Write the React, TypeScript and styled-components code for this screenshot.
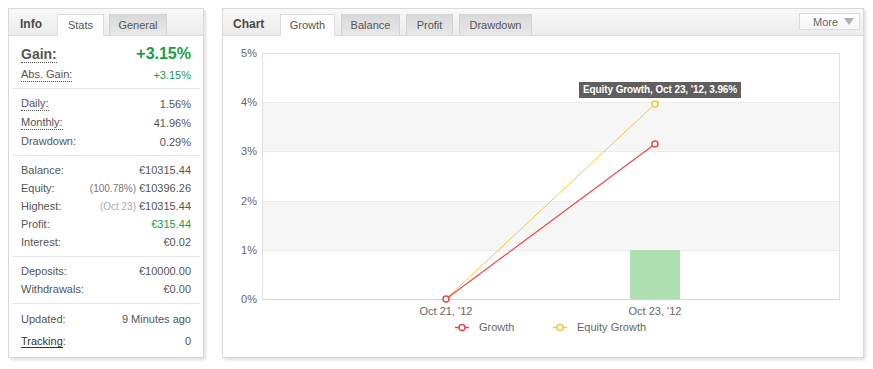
import React from "react";
import styled, { createGlobalStyle } from "styled-components";

const GlobalStyle = createGlobalStyle`
  body {
    margin: 0;
    background: #fff;
    font-family: "Liberation Sans", Arial, sans-serif;
    font-size: 11px;
    color: #555;
  }
`;

const Page = styled.div`
  display: flex;
  align-items: flex-start;
  gap: 18px;
  padding: 8px;
`;

const Panel = styled.div<{ $width: number }>`
  width: ${({ $width }) => $width}px;
  height: 350px;
  box-sizing: border-box;
  border: 1px solid #d9d9d9;
  background: #fff;
  box-shadow: 2px 2px 3px rgba(0, 0, 0, 0.13);
  display: flex;
  flex-direction: column;
`;

const Header = styled.div`
  height: 26px;
  flex: none;
  display: flex;
  align-items: flex-end;
  background: linear-gradient(#f8f8f8, #ebebeb);
  border-bottom: 1px solid #dcdcdc;
`;

const Title = styled.div<{ $width: number; $pad: number }>`
  width: ${({ $width }) => $width}px;
  padding-left: ${({ $pad }) => $pad}px;
  box-sizing: border-box;
  height: 21px;
  line-height: 21px;
  font-size: 12px;
  font-weight: bold;
  color: #4a4a4a;
`;

const Tabs = styled.div<{ $gap: number }>`
  display: flex;
  align-items: flex-end;
  gap: ${({ $gap }) => $gap}px;
`;

const Tab = styled.div<{ $active?: boolean; $width: number }>`
  width: ${({ $width }) => $width}px;
  height: ${({ $active }) => ($active ? 22 : 21)}px;
  margin-bottom: ${({ $active }) => ($active ? -1 : 0)}px;
  box-sizing: border-box;
  border: 1px solid ${({ $active }) => ($active ? "#dcdcdc" : "#d2d2d2")};
  border-bottom: none;
  background: ${({ $active }) =>
    $active ? "#fff" : "linear-gradient(#d9d9d9, #e8e8e8)"};
  text-align: center;
  line-height: 20px;
  font-size: 11px;
  color: #555;
`;

const MoreButton = styled.div`
  align-self: flex-start;
  margin: 4px 3px 0 auto;
  width: 61px;
  height: 17px;
  box-sizing: border-box;
  border: 1px solid #dcdcdc;
  background: linear-gradient(#fff, #f4f4f4);
  display: flex;
  align-items: center;
  padding: 0 5px 0 13px;
  color: #666;
  font-size: 11px;
`;

const Caret = styled.span`
  margin-left: auto;
  width: 0;
  height: 0;
  border-left: 5px solid transparent;
  border-right: 5px solid transparent;
  border-top: 7px solid #b0b0b0;
`;

const Section = styled.div<{ $pt: number; $pb: number }>`
  margin: 0 3px;
  padding: ${({ $pt, $pb }) => `${$pt}px 9px ${$pb}px`};
  & + & {
    border-top: 1px solid #e6e6e6;
  }
`;

const Row = styled.div<{ $h: number }>`
  height: ${({ $h }) => $h}px;
  display: flex;
  align-items: center;
  justify-content: space-between;
  white-space: nowrap;
`;

const Label = styled.span<{ $big?: boolean; $hint?: boolean; $link?: boolean }>`
  font-size: ${({ $big }) => ($big ? 14 : 11)}px;
  font-weight: ${({ $big }) => ($big ? "bold" : "normal")};
  color: ${({ $link }) => ($link ? "#333" : "#555")};
  line-height: ${({ $big }) => ($big ? 16 : 13)}px;
  border-bottom: ${({ $hint, $link }) =>
    $hint ? "1px dotted #555" : $link ? "1px solid #333" : "none"};
`;

const Value = styled.span<{ $big?: boolean; $green?: boolean }>`
  font-size: ${({ $big }) => ($big ? 16 : 11)}px;
  font-weight: ${({ $big }) => ($big ? "bold" : "normal")};
  color: ${({ $green }) => ($green ? "#189c45" : "#555")};
`;

const Note = styled.span<{ $light?: boolean }>`
  font-size: 10px;
  color: ${({ $light }) => ($light ? "#aaa" : "#777")};
  margin-right: 3px;
`;

const ChartBody = styled.div`
  position: relative;
  flex: 1;
`;

const Tooltip = styled.div`
  position: absolute;
  left: 356px;
  top: 46px;
  height: 16px;
  line-height: 16px;
  padding: 0 4px;
  background: #5f5f5f;
  color: #fff;
  font-size: 10px;
  font-weight: bold;
  letter-spacing: -0.1px;
  white-space: nowrap;
`;

const statSections = [
  {
    pt: 7,
    pb: 4,
    rows: [
      { h: 22, label: "Gain:", value: "+3.15%", big: true, hint: true, green: true },
      { h: 19, label: "Abs. Gain:", value: "+3.15%", hint: true, green: true },
    ],
  },
  {
    pt: 5,
    pb: 4,
    rows: [
      { h: 19, label: "Daily:", value: "1.56%", hint: true },
      { h: 19, label: "Monthly:", value: "41.96%", hint: true },
      { h: 19, label: "Drawdown:", value: "0.29%" },
    ],
  },
  {
    pt: 5,
    pb: 5,
    rows: [
      { h: 18, label: "Balance:", value: "€10315.44" },
      { h: 18, label: "Equity:", value: "€10396.26", note: "(100.78%)" },
      { h: 18, label: "Highest:", value: "€10315.44", note: "(Oct 23)", light: true },
      { h: 18, label: "Profit:", value: "€315.44", green: true },
      { h: 18, label: "Interest:", value: "€0.02" },
    ],
  },
  {
    pt: 5,
    pb: 5,
    rows: [
      { h: 18, label: "Deposits:", value: "€10000.00" },
      { h: 18, label: "Withdrawals:", value: "€0.00" },
    ],
  },
  {
    pt: 4,
    pb: 4,
    rows: [
      { h: 22, label: "Updated:", value: "9 Minutes ago" },
      { h: 22, label: "Tracking", value: "0", link: true },
    ],
  },
];

type StatRow = {
  h: number;
  label: string;
  value: string;
  big?: boolean;
  hint?: boolean;
  green?: boolean;
  note?: string;
  light?: boolean;
  link?: boolean;
};

const InfoPanel = () => (
  <Panel $width={196}>
    <Header>
      <Title $width={48} $pad={11}>Info</Title>
      <Tabs $gap={5}>
        <Tab $active $width={47}>Stats</Tab>
        <Tab $width={58}>General</Tab>
      </Tabs>
    </Header>
    {statSections.map((section, i) => (
      <Section key={i} $pt={section.pt} $pb={section.pb}>
        {section.rows.map((r: StatRow) => (
          <Row key={r.label} $h={r.h}>
            {r.link ? (
              <span>
                <Label $link>{r.label}</Label>:
              </span>
            ) : (
              <Label $big={r.big} $hint={r.hint}>{r.label}</Label>
            )}
            <span>
              {r.note ? <Note $light={r.light}>{r.note}</Note> : null}
              <Value $big={r.big} $green={r.green}>{r.value}</Value>
            </span>
          </Row>
        ))}
      </Section>
    ))}
  </Panel>
);

const RED = "#e8484a";
const YELLOW = "#f7c53a";
const yTicks = [
  { label: "5%", y: 17 },
  { label: "4%", y: 66 },
  { label: "3%", y: 115 },
  { label: "2%", y: 165 },
  { label: "1%", y: 214 },
  { label: "0%", y: 263 },
];

const GrowthChart = () => (
  <svg width="640" height="320" style={{ display: "block" }}>
    <rect x="39" y="66" width="578" height="49" fill="#f6f6f6" />
    <rect x="39" y="165" width="578" height="49" fill="#f6f6f6" />
    {yTicks.slice(1, 5).map((t) => (
      <line key={t.label} x1="39" x2="617" y1={t.y + 0.5} y2={t.y + 0.5} stroke="#ececec" />
    ))}
    <rect x="39.5" y="17.5" width="577" height="246" fill="none" stroke="#e0e0e0" />
    <line x1="39" x2="617" y1="263.5" y2="263.5" stroke="#d4d4d4" />
    {yTicks.map((t) => (
      <text key={t.label} x="34" y={t.y + 4} textAnchor="end" fontSize="11" fill="#666"
        fontFamily="Liberation Sans, Arial, sans-serif">
        {t.label}
      </text>
    ))}
    <rect x="407" y="214" width="50" height="49" fill="#addfb0" />
    <line x1="223" y1="263" x2="432" y2="68" stroke={YELLOW} strokeWidth="1" />
    <line x1="223" y1="263" x2="432" y2="108" stroke={RED} strokeWidth="1.2" />
    <circle cx="432" cy="68" r="3" fill="#fff" stroke={YELLOW} strokeWidth="1.5" />
    <circle cx="432" cy="108" r="3" fill="#fff" stroke={RED} strokeWidth="1.5" />
    <circle cx="223" cy="263" r="3" fill="#fff" stroke={RED} strokeWidth="1.5" />
    <g fontSize="11" fill="#666" fontFamily="Liberation Sans, Arial, sans-serif" textAnchor="middle">
      <text x="223" y="279">Oct 21, '12</text>
      <text x="432" y="279">Oct 23, '12</text>
    </g>
    <g fontSize="11" fill="#666" fontFamily="Liberation Sans, Arial, sans-serif">
      <line x1="232" x2="246" y1="291.5" y2="291.5" stroke={RED} strokeWidth="1.5" />
      <circle cx="239" cy="291.5" r="3" fill="#fff" stroke={RED} strokeWidth="1.5" />
      <text x="256" y="295">Growth</text>
      <line x1="330" x2="344" y1="291.5" y2="291.5" stroke={YELLOW} strokeWidth="1.5" />
      <circle cx="337" cy="291.5" r="3" fill="#fff" stroke={YELLOW} strokeWidth="1.5" />
      <text x="354" y="295">Equity Growth</text>
    </g>
  </svg>
);

const ChartPanel = () => (
  <Panel $width={642}>
    <Header>
      <Title $width={57} $pad={10}>Chart</Title>
      <Tabs $gap={6}>
        <Tab $active $width={55}>Growth</Tab>
        <Tab $width={59}>Balance</Tab>
        <Tab $width={47}>Profit</Tab>
        <Tab $width={73}>Drawdown</Tab>
      </Tabs>
      <MoreButton>
        More
        <Caret />
      </MoreButton>
    </Header>
    <ChartBody>
      <GrowthChart />
      <Tooltip>Equity Growth, Oct 23, '12, 3.96%</Tooltip>
    </ChartBody>
  </Panel>
);

export default function App() {
  return (
    <>
      <GlobalStyle />
      <Page>
        <InfoPanel />
        <ChartPanel />
      </Page>
    </>
  );
}
